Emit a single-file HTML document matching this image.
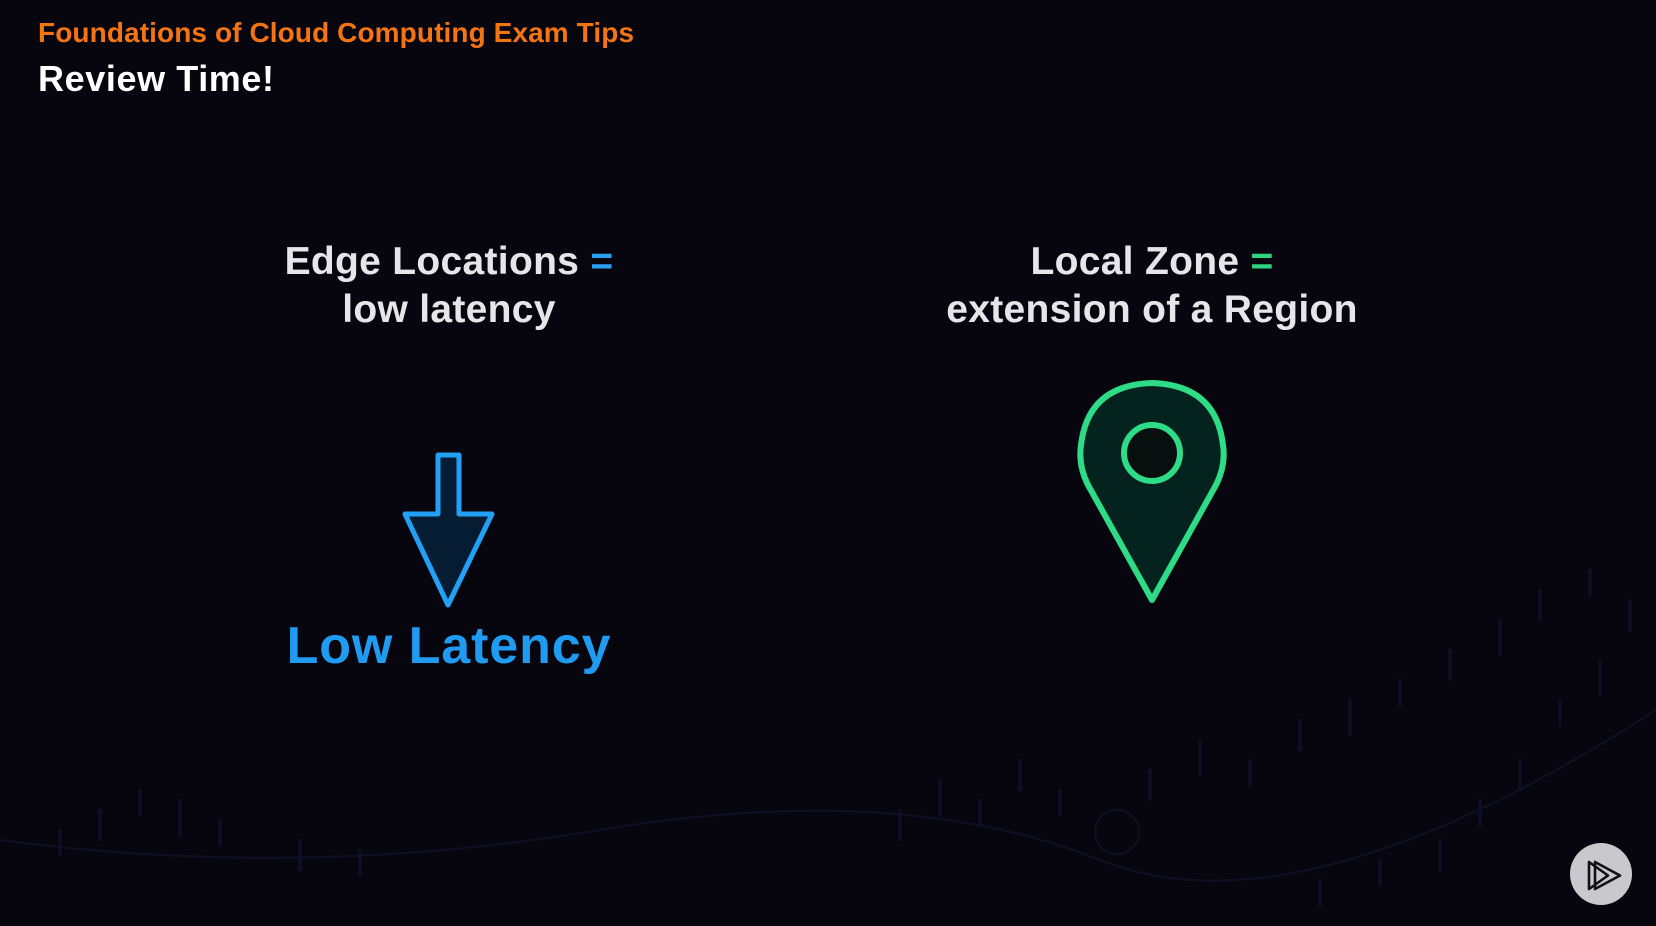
<!DOCTYPE html>
<html><head><meta charset="utf-8"><style>
html,body{margin:0;padding:0}
body{width:1656px;height:926px;background:#07060f;position:relative;overflow:hidden;font-family:"Liberation Sans",sans-serif;font-weight:bold}
.t{position:absolute;white-space:nowrap}
</style></head><body>
<div class="t" style="left:38px;top:17px;font-size:28px;color:#f47412;letter-spacing:0.1px">Foundations of Cloud Computing Exam Tips</div>
<div class="t" style="left:38px;top:58px;font-size:36px;color:#fff;letter-spacing:0.6px">Review Time!</div>
<div class="t" style="left:199px;width:500px;top:238px;text-align:center;font-size:39px;line-height:48px;color:#e6e6ea;letter-spacing:0.3px">Edge Locations <span style="color:#2aa0f5">=</span><br>low latency</div>
<div class="t" style="left:902px;width:500px;top:238px;text-align:center;font-size:39px;line-height:48px;color:#e6e6ea;letter-spacing:0.3px">Local Zone <span style="color:#2ed47f">=</span><br>extension of a Region</div>
<div class="t" style="left:199px;width:500px;top:616px;text-align:center;font-size:52px;color:#1f9cf2;letter-spacing:0.9px">Low Latency</div>
<svg width="1656" height="926" style="position:absolute;left:0;top:0">
<g stroke="#13132a" opacity="0.8">
<path d="M0 840 Q300 880 600 830 T1100 860 T1656 710" fill="none" stroke-width="2"/>
<circle cx="1117" cy="832" r="22" fill="none" stroke-width="2"/>
</g>
<g stroke="#11112e" stroke-width="3" stroke-linecap="round" opacity="0.9">
<path d="M60 830v25M100 810v30M140 790v25M180 800v35M220 820v25M300 840v30M360 850v25M900 810v30M940 780v35M980 800v25M1020 760v30M1060 790v25M1150 770v30M1200 740v35M1250 760v25M1300 720v30M1350 700v35M1400 680v25M1450 650v30M1500 620v35M1540 590v30M1590 570v25M1630 600v30M1600 660v35M1560 700v25M1520 760v30M1480 800v25M1440 840v30M1380 860v25M1320 880v25"/>
</g>
<path d="M438 455 H459 V514 H492 L448 605 L405 514 H438 Z" fill="#061c33" stroke="#22a0f5" stroke-width="5" stroke-linejoin="round"/>
<path d="M1152 600 L1088 485 Q1078 465 1081 445 Q1088 385 1152 383 Q1216 385 1223 445 Q1226 465 1216 485 Z" fill="#05231e" stroke="#2edb86" stroke-width="6" stroke-linejoin="round"/>
<circle cx="1152" cy="453" r="28" fill="#07100f" stroke="#2edb86" stroke-width="6"/>
<circle cx="1601" cy="874" r="31" fill="#c9c9cd"/>
<path d="M1589 862 V889 L1608 875.5 Z M1595 862 V889 L1620 875.5 Z" fill="none" stroke="#111" stroke-width="2.6" stroke-linejoin="round"/>
</svg>
</body></html>
